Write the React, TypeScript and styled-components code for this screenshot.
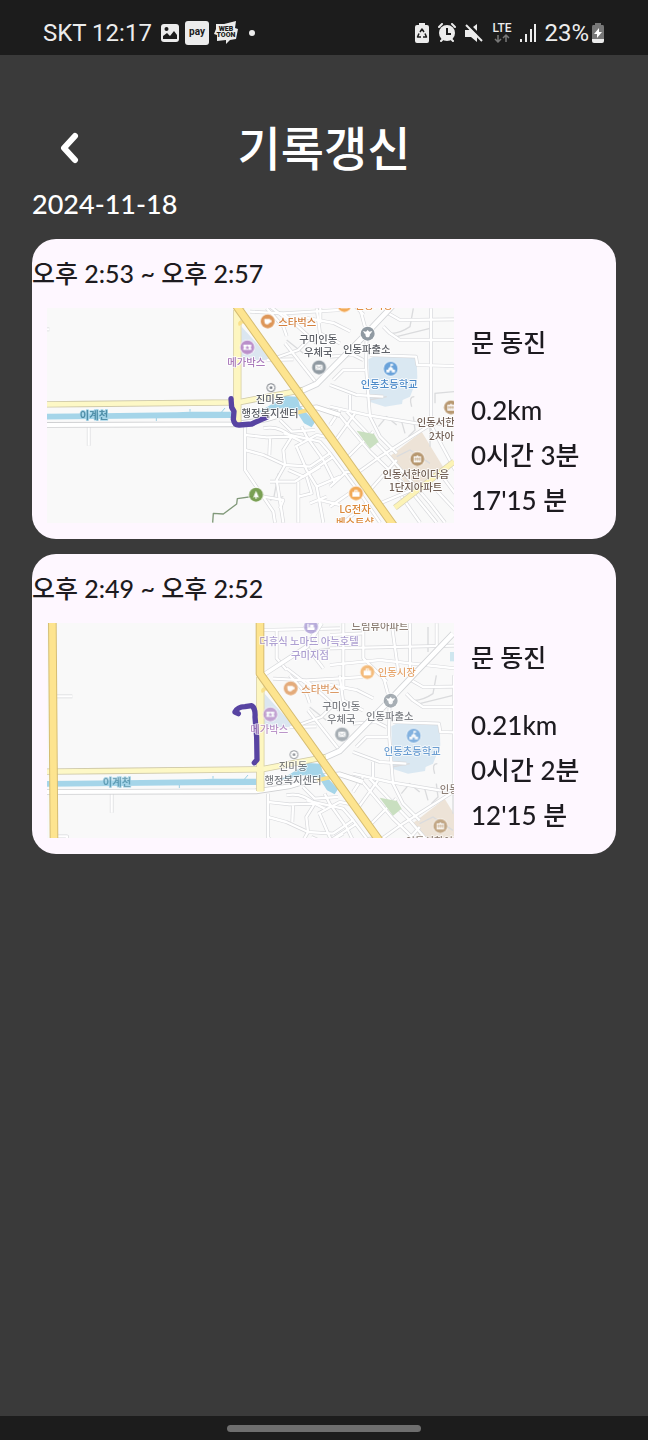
import React from "react";
import styled, { createGlobalStyle } from "styled-components";

const GlobalStyle = createGlobalStyle`
  * { box-sizing: border-box; }
  body { margin: 0; background: #3a3a3a; }
`;

const Screen = styled.div`
  display: flex;
  flex-direction: column;
  min-height: 100vh;
  background: #3a3a3a;
  color: #fff;
  font-family: Lato, "Noto Sans CJK KR", sans-serif;
`;

const StatusBar = styled.header`
  display: flex;
  align-items: center;
  justify-content: space-between;
  height: 55px;
  padding: 11px 43px 0;
  background: #1c1c1c;
  color: #ececec;
  font: 24px/28px Roboto, sans-serif;
`;

const StatusGroup = styled.div<{ $gap: number }>`
  display: flex;
  align-items: center;
  gap: ${(p) => p.$gap}px;
`;

const Glyph = styled.svg`
  display: block;
  flex: none;
`;

const BatteryLevel = styled.span`
  display: flex;
  align-items: center;
  gap: 2px;
`;

const TitleBar = styled.div`
  display: grid;
  grid-template-columns: 1fr auto 1fr;
  align-items: center;
  padding: 60px 50px 0;
`;

const BackButton = styled.button`
  display: flex;
  align-items: center;
  justify-content: center;
  width: 40px;
  height: 40px;
  padding: 0;
  border: 0;
  background: none;
  color: #fff;
  cursor: pointer;
`;

const Title = styled.h1`
  margin: 0;
  font-size: 47px;
  line-height: 66px;
  font-weight: 500;
`;

const Main = styled.main`
  flex: 1;
  padding: 6px 32px 32px;
`;

const DateHeading = styled.h2`
  margin: 0 0 18px;
  font-size: 27px;
  line-height: 34px;
  font-weight: 500;
`;

const RecordList = styled.div`
  display: flex;
  flex-direction: column;
  gap: 15px;
`;

const Card = styled.article`
  overflow: hidden;
  border-radius: 24px;
  background: #fef7ff;
  color: #1d1b20;
`;

const TimeRange = styled.h3`
  margin: 0;
  font-size: 25px;
  line-height: 69px;
  font-weight: 500;
`;

const CardBody = styled.div`
  display: flex;
  align-items: flex-start;
  gap: 17px;
  padding: 0 16px 16px 15px;
`;

const MapFrame = styled.div`
  flex: 1;
  min-width: 0;
`;

const MapSvg = styled.svg`
  display: block;
  width: 100%;
  height: auto;
  font-family: "Noto Sans CJK KR", sans-serif;
`;

const Stats = styled.div`
  flex: 0 0 129px;
  padding-top: 12px;
  white-space: nowrap;
  font-weight: 500;
`;

const Runner = styled.p`
  margin: 0 0 23px;
  font-size: 25px;
  line-height: 45px;
`;

const Stat = styled.p`
  margin: 0;
  font-size: 26px;
  line-height: 45px;
`;

const GestureBar = styled.footer`
  display: flex;
  align-items: center;
  justify-content: center;
  height: 24px;
  background: #1c1c1c;
`;

const Handle = styled.div`
  width: 30%;
  height: 7px;
  border-radius: 4px;
  background: #6e6e6e;
`;

/* Neighbourhood streets, grouped by district; each district has its own origin. */
const districts: { x: number; y: number; streets: string[] }[] = [
  {
    x: 660,
    y: 900,
    streets: [
      "M75 380V510L160 635L165 668",
      "M75 405L140 412L215 410L245 425",
      "M75 450L130 465L195 495L270 500",
      "M150 415L148 465",
      "M130 385Q175 375 215 410L190 450L195 495L170 540L190 668",
      "M230 440L260 510L290 560L310 668",
      "M150 545L225 545L340 470",
      "M235 545V668",
      "M130 590L190 600L180 625",
      "M235 590L275 580L260 530",
      "M290 560L360 530",
      "M300 600L360 615",
      "M270 500L330 460L300 425L190 400",
      "M225 440L290 405L345 415",
      "M245 380L260 410L310 480L345 550",
      "M180 360L215 395L285 390",
      "M205 510L250 530L300 500",
      "M270 610L320 590",
      "M90 35L190 40L360 30",
      "M140 25L190 80L200 108",
      "M290 25L300 100L360 130",
      "M190 40L290 130",
      "M150 180L235 150L280 105",
      "M195 130L290 250",
      "M140 180L220 178",
    ],
  },
  {
    x: 990,
    y: 900,
    streets: [
      "M90 25L110 100L108 200L120 350L150 410L200 460",
      "M303 25V370",
      "M175 40L210 60L375 58",
      "M160 80L180 100L210 120L375 120",
      "M120 165L258 170L262 195L375 198",
      "M0 255L80 285L160 290",
      "M0 320L110 345L260 370L375 372",
      "M60 285V330",
      "M10 240L40 210L105 210",
      "M0 170L70 165L100 180",
      "M80 520L150 470L300 375",
      "M0 375L30 330",
      "M10 430L75 340",
      "M45 480L130 395",
      "M20 335L120 455L240 570L320 668",
      "M50 335L170 460L300 610L345 668",
      "M120 570L200 480",
      "M150 610L245 570",
      "M0 460L90 580L150 668",
      "M0 560L50 515L80 520",
      "M0 620L80 565",
      "M40 668L110 610",
      "M300 370L375 510",
      "M215 590L270 668",
      "M330 520L375 580",
      "M300 550L375 630",
    ],
  },
  {
    x: 921,
    y: 744,
    streets: [
      "M40 25V225",
      "M100 25V130L170 200",
      "M0 150L150 135L375 160",
      "M240 25V165",
      "M185 25L205 170",
      "M0 100L240 95L375 92",
      "M0 210L80 225L130 250",
      "M0 60L100 55",
      "M320 25V95",
    ],
  },
  {
    x: 591,
    y: 744,
    streets: [
      "M130 45L360 40",
      "M170 45V130L200 165",
      "M290 25V90",
      "M200 160L290 230",
      "M260 95L310 160",
    ],
  },
];

const footways = [
  "M1175 1000Q1200 1000 1230 980L1240 925",
  "M1190 1010L1290 985",
  "M1235 1220Q1225 1190 1243 1190",
  "M1305 1210V1180L1362 1175",
  "M1135 1280L1160 1250L1190 1275",
  "M1205 1265L1215 1300",
  "M1240 1250L1245 1290L1225 1310",
  "M1290 1270V1340",
  "M1105 1200L1160 1190",
  "M1190 1370L1230 1350L1290 1390",
  "M860 1020L910 1060",
  "M870 850L950 840",
  "M1085 880L1180 890",
  "M1215 855V780",
  "M1250 900L1362 905",
  "M810 1500L850 1490",
  "M835 1420L820 1500",
];

type Poi = {
  x: number;
  y: number;
  color: string;
  symbol: "cup" | "ticket" | "mail" | "police" | "school" | "flats" | "bag" | "tree" | "bed";
};

const pois: Poi[] = [
  { x: 803, y: 964, color: "#dc9150", symbol: "cup" },
  { x: 742, y: 1042, color: "#b98bc8", symbol: "ticket" },
  { x: 957, y: 1102, color: "#8b959d", symbol: "mail" },
  { x: 1103, y: 1001, color: "#8b959d", symbol: "police" },
  { x: 1172, y: 1106, color: "#649fd8", symbol: "school" },
  { x: 1353, y: 1222, color: "#b5946b", symbol: "flats" },
  { x: 1252, y: 1377, color: "#b5946b", symbol: "flats" },
  { x: 1068, y: 1480, color: "#f2a650", symbol: "bag" },
  { x: 1033, y: 915, color: "#f2a650", symbol: "bag" },
  { x: 768, y: 1484, color: "#739b4b", symbol: "tree" },
  { x: 864, y: 779, color: "#a494d2", symbol: "bed" },
];

const symbols: Record<Poi["symbol"], React.ReactNode> = {
  cup: <path d="M-10-7H7V-4Q13-5 12 0Q11 4 6 4Q4 9-1 9H-3Q-10 8-10 0Z" fill="#fff" />,
  ticket: (
    <>
      <path d="M-12-8H12V-3Q8 0 12 3V8H-12V3Q-8 0-12-3Z" fill="#fff" />
      <path d="M0-6L2-1H6L3 2L4 6L0 4L-4 6L-3 2L-6-1H-2Z" fill="#b98bc8" />
    </>
  ),
  mail: (
    <>
      <rect x="-11" y="-8" width="22" height="16" rx="2" fill="#fff" />
      <path d="M-9-6L0 1L9-6M-9 6L-3 0M9 6L3 0" fill="none" stroke="#8b959d" strokeWidth="2" />
    </>
  ),
  police: <path d="M-14-8L-5-6L0-11L5-6L14-8L9 0H7Q7 11 0 11Q-7 11-7 0H-9Z" fill="#fff" />,
  school: <path d="M-1-14H7V-9H1V-6L7-1V3H13V11H3V5H-3V11H-13V3H-7V-1L-1-6Z" fill="#fff" />,
  flats: (
    <>
      <path d="M-11-8H-2V-11H2V-8H11V10H-11Z" fill="#fff" />
      <path d="M-6-5V6M0-5V6M6-5V6M-9 0H9" stroke="#b5946b" strokeWidth="2" />
    </>
  ),
  bag: (
    <path d="M-11-4H-5V-10H5V-4H11V10H-11ZM-2-7V-4H2V-7Z" fill="#fff" fillRule="evenodd" />
  ),
  tree: <path d="M0-12L9 9L2 6V12H-2V6L-9 9Z" fill="#fff" />,
  bed: <path d="M-11-9H-7V2H-3V-6H8V2H11V10H-11Z" fill="#fff" />,
};

type MapLabel = { x: number; y: number; text: string; color: string; start?: boolean; weight?: number };

const ink = "#55585f";
const brown = "#6b584d";
const labels: MapLabel[] = [
  { x: 282, y: 1246, text: "이계천", color: "#4a8ba5", weight: 700 },
  { x: 835, y: 965, text: "스타벅스", color: "#d17a35", start: true },
  { x: 739, y: 1087, text: "메가박스", color: "#a673b8" },
  { x: 955, y: 1017, text: "구미인동", color: ink },
  { x: 955, y: 1056, text: "우체국", color: ink },
  { x: 810, y: 1198, text: "진미동", color: ink },
  { x: 810, y: 1239, text: "행정복지센터", color: ink },
  { x: 1100, y: 1046, text: "인동파출소", color: ink },
  { x: 1168, y: 1151, text: "인동초등학교", color: "#4585c6" },
  { x: 1247, y: 1421, text: "인동서한이다음", color: brown },
  { x: 1247, y: 1461, text: "1단지아파트", color: brown },
  { x: 1065, y: 1527, text: "LG전자", color: "#d9822f" },
  { x: 1065, y: 1566, text: "베스트샵", color: "#d9822f" },
  { x: 1064, y: 916, text: "인동시장", color: "#df883c", start: true },
  { x: 858, y: 822, text: "더휴식 노마드 아늑호텔", color: "#9482c4" },
  { x: 861, y: 863, text: "구미지점", color: "#9482c4" },
  { x: 1071, y: 776, text: "드림뷰아파트", color: brown },
];

type RunMapProps = {
  left: number;
  top: number;
  route: string;
  fade: number;
  label: string;
  edgeLabels: MapLabel[];
};

function RunMap({ left, top, route, fade, label, edgeLabels }: RunMapProps) {
  const visible = [...labels, ...edgeLabels].filter((l) => l.y > top - 12 && l.y < top + 657);
  return (
    <MapSvg viewBox={`${left} ${top} 1221 645`} role="img" aria-label={label}>
      <rect x={left} y={top} width="1221" height="645" fill="#f9f9f9" />

      <path d="M725 980L815 1080H722Z" fill="#dbe6f0" />
      <path d="M1105 1078L1120 1070L1250 1072L1252 1135L1230 1190L1208 1200L1206 1212L1155 1220L1108 1205Z" fill="#dae8f2" />
      <path d="M1168 1370L1265 1295L1335 1410L1230 1475Z" fill="#ede3d7" />
      <rect x="1281" y="855" width="20" height="28" fill="#cfe6ef" />

      <g fill="none" stroke="#dadbdd" strokeWidth="4">
        {footways.map((d) => (
          <path key={d} d={d} />
        ))}
      </g>
      {[
        { color: "#d8d9dc", width: 11 },
        { color: "#ffffff", width: 7 },
      ].map((pass) => (
        <g key={pass.color} fill="none" stroke={pass.color} strokeWidth={pass.width} strokeLinejoin="round">
          {districts.map((area) => (
            <g key={`${area.x}-${area.y}`} transform={`translate(${area.x} ${area.y})`}>
              {area.streets.map((d) => (
                <path key={d} d={d} />
              ))}
            </g>
          ))}
          <path d="M266 1278V1337M88 988H148M94 1408H132V1420" />
        </g>
      ))}
      <path d="M1070 1292L1122 1302L1136 1325L1110 1346Z" fill="#c9dfc0" />

      <g fill="none">
        <path d="M903 1173L950 1152L1092 1008L1180 915L1290 800" stroke="#d2d4d7" strokeWidth="19" />
        <path d="M903 1173L950 1152L1092 1008L1180 915L1290 800" stroke="#fff" strokeWidth="14" />
        <path d="M721 924L851 839L895 768" stroke="#d8dadc" strokeWidth="15" />
        <path d="M721 924L851 839L895 768" stroke="#fff" strokeWidth="11" />
        <path d="M60 1275L700 1273L800 1258L900 1227L950 1222L1020 1245" stroke="#cfd0d2" strokeWidth="17" />
        <path d="M60 1275L700 1273L800 1258L900 1227L950 1222L1020 1245" stroke="#fff" strokeWidth="12" />
      </g>

      <path d="M60 1242L300 1240L530 1237L570 1235H700V1254L500 1255L60 1259Z" fill="#a5d5e9" />
      <path d="M765 1241L800 1222L855 1188L892 1190L900 1218L945 1266L935 1282L912 1270L888 1232L840 1225Z" fill="#a5d5e9" />
      <path d="M570 1227V1235M675 1224L664 1237M469 1254V1263" stroke="#9ccfe4" strokeWidth="3" />

      <g fill="none" strokeLinejoin="round">
        <path d="M60 1214L250 1212L715 1207L820 1187L908 1170" stroke="#cfc9a8" strokeWidth="19" />
        <path d="M712 930V1272" stroke="#d9d1a5" strokeWidth="25" />
        <path d="M60 1214L250 1212L715 1207L820 1187L908 1170" stroke="#fdf8c6" strokeWidth="14" />
        <path d="M712 930V1274" stroke="#fdf6c0" strokeWidth="20" />
        <path d="M1185 1523L1362 1385" stroke="#d6d0b3" strokeWidth="18" />
        <path d="M1185 1523L1362 1385" stroke="#fcf3b6" strokeWidth="14" />
        <path d="M882 1240L925 1230" stroke="#fae08a" strokeWidth="12" />
        <path d="M721 976Q715 964 732 966" stroke="#f9e08a" strokeWidth="10" />
        <path d="M711 760V920L1190 1590M88 760L93 1420" stroke="#d6bd73" strokeWidth="26" />
        <path d="M711 760V920L1190 1590M88 760L93 1420" stroke="#fde48f" strokeWidth="20" />
        <path d="M638 1568L640 1540L670 1542L710 1512L712 1496L768 1488" stroke="#81997a" strokeWidth="4" />
      </g>

      <g opacity={fade}>
        {pois.map((poi) => (
          <g key={`${poi.x}-${poi.y}`} transform={`translate(${poi.x} ${poi.y})`}>
            <circle r="23" fill="#fff" />
            <circle r="21" fill={poi.color} />
            {symbols[poi.symbol]}
          </g>
        ))}
        <circle cx="813" cy="1163" r="12" fill="#fff" stroke="#6c7178" strokeWidth="3" />
        <circle cx="813" cy="1163" r="4" fill="#6c7178" />
      </g>

      <path d={route} fill="none" stroke="#5844a2" strokeWidth="16" strokeLinecap="round" strokeLinejoin="round" />

      <g opacity={fade} fontSize="31" strokeWidth="5" strokeLinejoin="round" paintOrder="stroke">
        {visible.map((l) => (
          <text
            key={`${l.x}-${l.y}`}
            x={l.x}
            y={l.y + 12}
            fill={l.color}
            stroke={l.text === "이계천" ? "#a5d5e9" : "#ffffff"}
            fontWeight={l.weight ?? 500}
            textAnchor={l.start ? "start" : "middle"}
          >
            {l.text}
          </text>
        ))}
      </g>
    </MapSvg>
  );
}

const records = [
  {
    range: "오후 2:53 ~ 오후 2:57",
    runner: "문 동진",
    stats: ["0.2km", "0시간 3분", "17'15 분"],
    map: {
      left: 141,
      top: 924,
      fade: 0.95,
      route: "M693 1196L695 1222L702 1234L700 1258Q703 1276 718 1275L755 1272L780 1260L800 1252",
      edgeLabels: [
        { x: 1250, y: 1266, text: "인동서한", color: brown, start: true },
        { x: 1287, y: 1308, text: "2차아", color: brown, start: true },
      ],
    },
  },
  {
    range: "오후 2:49 ~ 오후 2:52",
    runner: "문 동진",
    stats: ["0.21km", "0시간 2분", "12'15 분"],
    map: {
      left: 72,
      top: 768,
      fade: 0.75,
      route: "M646 1040L636 1035Q643 1020 666 1019L686 1016Q698 1024 696 1050L701 1110L702 1178L694 1187",
      edgeLabels: [{ x: 1250, y: 1266, text: "인동", color: brown, start: true }],
    },
  },
];

function NotificationIcons() {
  return (
    <StatusGroup $gap={5}>
      <Glyph width="20" height="20" viewBox="0 0 20 20" aria-hidden="true">
        <rect x="1" y="1" width="18" height="18" rx="3" fill="#ececec" />
        <circle cx="6.500" cy="6" r="2" fill="#1c1c1c" />
        <path d="M3 16V13L7 10L10 13L14 8L17 12V16Z" fill="#1c1c1c" />
      </Glyph>
      <Glyph width="24" height="24" viewBox="0 0 24 24" aria-hidden="true">
        <rect width="24" height="24" rx="3" fill="#ececec" />
        <text x="12" y="14" textAnchor="middle" fontSize="10" fontWeight="700" fontFamily="Roboto, sans-serif" fill="#1c1c1c">pay</text>
      </Glyph>
      <Glyph width="24" height="24" viewBox="0 0 24 24" aria-hidden="true">
        <path d="M2 3L10 3L22 0L21 7L24 8L22 18L16 19L12 23L12 19L3 20L3 14L0 13L2 8Z" fill="#ececec" />
        <g textAnchor="middle" fontSize="7" fontWeight="900" fontFamily="Roboto, sans-serif" fill="#1c1c1c">
          <text x="12" y="10">WEB</text>
          <text x="12" y="16">TOON</text>
        </g>
      </Glyph>
      <Glyph width="16" height="16" viewBox="0 0 16 16" aria-hidden="true">
        <circle cx="9" cy="8" r="3" fill="#ececec" />
      </Glyph>
    </StatusGroup>
  );
}

function SystemIcons() {
  return (
    <StatusGroup $gap={8}>
      <Glyph width="16" height="20" viewBox="0 0 16 20" aria-hidden="true">
        <path d="M5 0H11V2H13Q15 2 15 4V18Q15 20 13 20H3Q1 20 1 18V4Q1 2 3 2H5Z" fill="#ececec" />
        <path d="M6 9L8 6L10 9M11 10.500L12.500 14H9M7 14H3.500L5 10.500" fill="none" stroke="#1c1c1c" strokeWidth="1.500" strokeLinejoin="round" />
      </Glyph>
      <Glyph width="18" height="20" viewBox="0 0 18 20" aria-hidden="true">
        <circle cx="9" cy="10" r="8" fill="#ececec" />
        <path d="M9 5V11H13" fill="none" stroke="#1c1c1c" strokeWidth="2" />
        <path d="M1 4L4 1M17 4L14 1M3 18L5 16M15 18L13 16" stroke="#ececec" strokeWidth="2" strokeLinecap="round" />
      </Glyph>
      <Glyph width="20" height="20" viewBox="0 0 20 20" aria-hidden="true">
        <path d="M1 7H5L13 1V19L7 14H1Z" fill="#ececec" />
        <path d="M3 0L20 17" stroke="#1c1c1c" strokeWidth="3" />
        <path d="M2 2L18 18" stroke="#ececec" strokeWidth="2" />
      </Glyph>
      <Glyph width="20" height="22" viewBox="0 0 20 22" aria-hidden="true">
        <text x="10" y="10" textAnchor="middle" fontSize="12" fontWeight="500" fontFamily="Roboto, sans-serif" fill="#ececec">LTE</text>
        <path d="M6 13V20M3 17L6 20L9 17M14 20V13M11 16L14 13L17 16" fill="none" stroke="#777" strokeWidth="1.500" />
      </Glyph>
      <Glyph width="16" height="20" viewBox="0 0 16 20" aria-hidden="true">
        <path d="M1 16V19M6 11V19M11 6V19M15 1V19" stroke="#ececec" strokeWidth="2" />
      </Glyph>
      <BatteryLevel>
        23%
        <Glyph width="14" height="20" viewBox="0 0 14 20" aria-hidden="true">
          <path d="M4 0H10V2H12Q13 2 13 4V16H1V4Q1 2 2 2H4Z" fill="#777" />
          <path d="M1 16H13V18Q13 20 11 20H3Q1 20 1 18Z" fill="#ececec" />
          <path d="M8 5L3 11H6L6 15L11 9H8Z" fill="#fff" />
        </Glyph>
      </BatteryLevel>
    </StatusGroup>
  );
}

export default function App() {
  return (
    <>
      <GlobalStyle />
      <Screen>
        <StatusBar>
          <StatusGroup $gap={8}>
            SKT 12:17
            <NotificationIcons />
          </StatusGroup>
          <SystemIcons />
        </StatusBar>
        <TitleBar>
          <BackButton type="button" aria-label="뒤로">
            <Glyph width="20" height="32" viewBox="0 0 20 32" aria-hidden="true">
              <path d="M15 4L4 16L15 28" fill="none" stroke="#fff" strokeWidth="6" strokeLinecap="round" strokeLinejoin="round" />
            </Glyph>
          </BackButton>
          <Title>기록갱신</Title>
        </TitleBar>
        <Main>
          <DateHeading>2024-11-18</DateHeading>
          <RecordList>
            {records.map((record) => (
              <Card key={record.range}>
                <TimeRange>{record.range}</TimeRange>
                <CardBody>
                  <MapFrame>
                    <RunMap {...record.map} label={record.range} />
                  </MapFrame>
                  <Stats>
                    <Runner>{record.runner}</Runner>
                    {record.stats.map((s) => (
                      <Stat key={s}>{s}</Stat>
                    ))}
                  </Stats>
                </CardBody>
              </Card>
            ))}
          </RecordList>
        </Main>
        <GestureBar>
          <Handle />
        </GestureBar>
      </Screen>
    </>
  );
}
